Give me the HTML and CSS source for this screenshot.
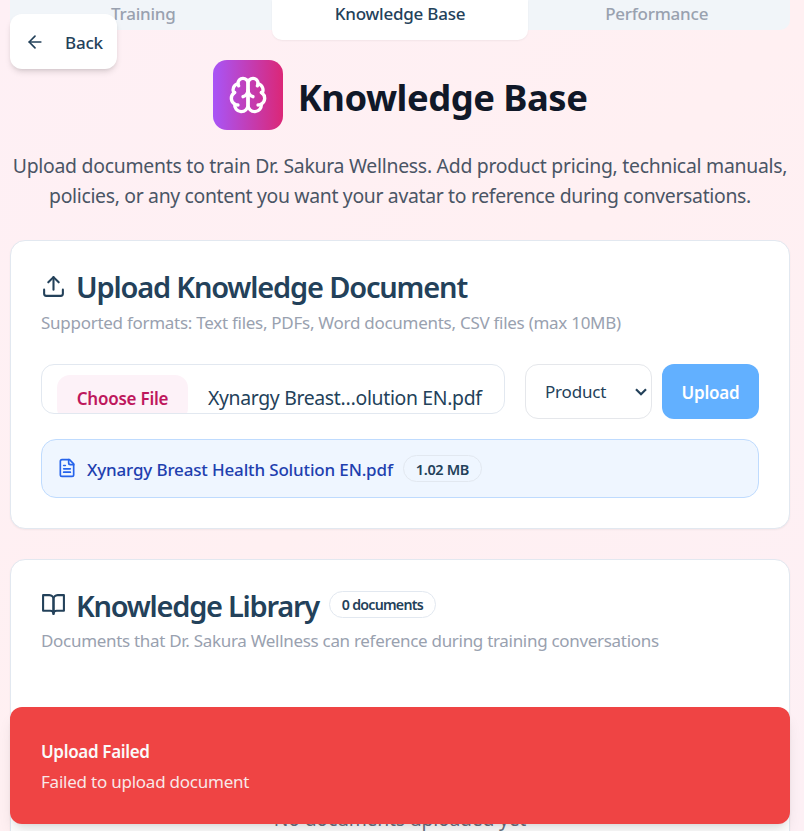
FILE: index.html
```html
<!DOCTYPE html>
<html lang="en">
<head>
<meta charset="utf-8">
<title>Knowledge Base</title>
<link rel="stylesheet" href="styles.css">
</head>
<body>
<nav class="tabs">
  <a class="tab">Training</a>
  <a class="tab active">Knowledge Base</a>
  <a class="tab">Performance</a>
</nav>
<button class="back">
  <svg class="icon" width="20" height="20" viewBox="0 0 24 24"><path d="m12 19-7-7 7-7"/><path d="M19 12H5"/></svg>
  <span>Back</span>
</button>
<main>
  <header class="hero">
    <div class="hero-row">
      <div class="logo">
        <svg class="icon" width="40" height="40" viewBox="0 0 24 24"><path d="M12 5a3 3 0 1 0-5.997.125 4 4 0 0 0-2.526 5.77 4 4 0 0 0 .556 6.588A4 4 0 1 0 12 18Z"/><path d="M12 5a3 3 0 1 1 5.997.125 4 4 0 0 1 2.526 5.77 4 4 0 0 1-.556 6.588A4 4 0 1 1 12 18Z"/><path d="M15 13a4.500 4.500 0 0 1-3-4 4.500 4.500 0 0 1-3 4"/><path d="M17.599 6.500a3 3 0 0 0 .399-1.375"/><path d="M6.003 5.125A3 3 0 0 0 6.401 6.500"/><path d="M3.477 10.896a4 4 0 0 1 .585-.396"/><path d="M19.938 10.500a4 4 0 0 1 .585.396"/><path d="M6 18a4 4 0 0 1-1.967-.516"/><path d="M19.967 17.484A4 4 0 0 1 18 18"/></svg>
      </div>
      <h1>Knowledge Base</h1>
    </div>
    <p class="lead"><span class="line">Upload documents to train Dr. Sakura Wellness. Add product pricing, technical manuals,</span> <span class="line tight">policies, or any content you want your avatar to reference during conversations.</span></p>
  </header>

  <section class="card">
    <h2><svg class="icon" width="25" height="25" viewBox="0 0 24 24"><path d="M21 15v4a2 2 0 0 1-2 2H5a2 2 0 0 1-2-2v-4"/><path d="m17 8-5-5-5 5"/><path d="M12 3v12"/></svg><span>Upload Knowledge Document</span></h2>
    <p class="desc">Supported formats: Text files, PDFs, Word documents, CSV files (max 10MB)</p>
    <div class="controls">
      <div class="file">
        <span class="choose">Choose File</span>
        <span class="name">Xynargy Breast…olution EN.pdf</span>
      </div>
      <div class="select">
        <span>Product</span>
        <svg class="chevron" width="12" height="8" viewBox="0 0 12 8"><path d="m1 1.300 5 5 5-5"/></svg>
      </div>
      <button class="upload">Upload</button>
    </div>
    <div class="selected">
      <svg class="icon" width="20" height="20" viewBox="0 0 24 24"><path d="M15 2H6a2 2 0 0 0-2 2v16a2 2 0 0 0 2 2h12a2 2 0 0 0 2-2V7Z"/><path d="M14 2v4a2 2 0 0 0 2 2h4"/><path d="M10 9H8"/><path d="M16 13H8"/><path d="M16 17H8"/></svg>
      <span class="selected-name">Xynargy Breast Health Solution EN.pdf</span>
      <span class="badge">1.02 MB</span>
    </div>
  </section>

  <section class="card library">
    <h2><svg class="icon" width="25" height="25" viewBox="0 0 24 24"><path d="M2 3h6a4 4 0 0 1 4 4v14a3 3 0 0 0-3-3H2z"/><path d="M22 3h-6a4 4 0 0 0-4 4v14a3 3 0 0 1 3-3h7z"/></svg><span class="library-title">Knowledge Library</span><span class="badge count">0 documents</span></h2>
    <p class="desc">Documents that Dr. Sakura Wellness can reference during training conversations</p>
    <p class="empty">No documents uploaded yet</p>
  </section>
</main>
<div class="toast">
  <strong>Upload Failed</strong>
  <span>Failed to upload document</span>
</div>
</body>
</html>
```
FILE: styles.css
```css
* { box-sizing: border-box; }
html, body { height: 100%; }
body {
  margin: 0;
  overflow: hidden;
  position: relative;
  font-family: "Noto Sans", "Open Sans", sans-serif;
  font-size: 17px;
  line-height: 25px;
  letter-spacing: -0.23px;
  color: #23415a;
  background: linear-gradient(135deg, #fef0f5 0%, #fff0f2 50%, #fdf0f5 100%);
}
h1, h2, p { margin: 0; }
button { font: inherit; letter-spacing: inherit; border: 0; color: inherit; }
.icon { fill: none; stroke: currentColor; stroke-width: 2; stroke-linecap: round; stroke-linejoin: round; flex: none; }

.tabs {
  display: grid;
  grid-template-columns: repeat(3, 1fr);
  align-items: start;
  height: 30px;
  margin: 0 14px 0 10px;
  padding: 0 5px;
  background: #f1f5f9;
  border-radius: 0 0 10px 10px;
}
.tab { height: 30px; line-height: 27px; text-align: center; font-weight: 500; color: #99a1af; }
.tab.active { height: 40px; background: #fff; color: #23415a; border-radius: 0 0 10px 10px; box-shadow: 0 1px 2px rgba(0, 0, 0, .05); }

.back {
  position: absolute;
  left: 10px;
  top: 14px;
  width: 107px;
  height: 55px;
  display: flex;
  align-items: center;
  gap: 20px;
  padding: 2px 15px 0;
  font-weight: 500;
  background: #fff;
  border-radius: 12px;
  box-shadow: 0 4px 6px -1px rgba(0, 0, 0, .12), 0 2px 4px -2px rgba(0, 0, 0, .12);
}
.back .icon { margin-top: -2px; }

main { padding: 30px 14px 0 10px; }
.hero { height: 180px; }
.hero-row { display: flex; justify-content: center; gap: 15px; }
.logo {
  width: 70px;
  height: 70px;
  display: flex;
  align-items: center;
  justify-content: center;
  color: #fff;
  background: linear-gradient(90deg, #a855f7, #db2777);
  border-radius: 14px;
}
h1 { padding-top: 4px; font-size: 36.4px; line-height: 66px; font-weight: 700; letter-spacing: -0.5px; color: #101828; }
.lead { margin-top: 21px; font-size: 19.4px; line-height: 30px; letter-spacing: -0.265px; text-align: center; color: #4a5565; }
.line { display: block; white-space: nowrap; }
.tight { letter-spacing: -0.325px; }

.card {
  height: 289px;
  padding: 30px;
  background: #fff;
  border: 1px solid #e2e8f0;
  border-radius: 15px;
  box-shadow: 0 1px 2px rgba(0, 0, 0, .05);
}
h2 { display: flex; align-items: center; gap: 10px; height: 32px; font-size: 29px; line-height: 32px; font-weight: 600; letter-spacing: -1.18px; }
h2 .icon { margin-top: -2px; }
.library-title { letter-spacing: -1.26px; }
.desc { margin-top: 7px; letter-spacing: -0.275px; color: #99a1af; white-space: nowrap; }
.controls { display: flex; align-items: flex-start; margin-top: 29px; }
.file {
  width: 464px;
  height: 50px;
  display: flex;
  align-items: flex-start;
  gap: 20px;
  overflow: hidden;
  padding: 10px 15px;
  border: 1px solid #e2e8f0;
  border-radius: 13px;
}
.choose { flex: none; width: 131px; height: 46px; line-height: 47px; text-align: center; font-weight: 600; color: #be185d; background: #fdf2f8; border-radius: 13px; }
.name { font-size: 19.4px; line-height: 46px; letter-spacing: -0.33px; white-space: nowrap; }
.select {
  width: 127px;
  height: 55px;
  display: flex;
  align-items: center;
  justify-content: space-between;
  margin: 0 10px 0 20px;
  padding: 0 4px 0 19px;
  letter-spacing: -0.2px;
  border: 1px solid #e5e7eb;
  border-radius: 13px;
}
.chevron { fill: none; stroke: currentColor; stroke-width: 2.200; }
.upload { width: 97px; height: 55px; padding: 2px 0 0; font-weight: 600; letter-spacing: -0.2px; color: #fff; background: #62b0ff; border-radius: 12px; }
.selected {
  display: flex;
  align-items: center;
  height: 59px;
  margin-top: 20px;
  padding: 0 15px;
  color: #2563eb;
  background: #eff6ff;
  border: 1px solid #bfdbfe;
  border-radius: 15px;
}
.selected .icon { margin-top: -2px; }
.selected-name { margin: 2px 10px 0; font-weight: 500; letter-spacing: -0.16px; color: #1e40af; white-space: nowrap; }
.badge { height: 27px; padding: 0 12px; font-size: 14.500px; line-height: 26px; font-weight: 600; letter-spacing: -0.35px; color: #23415a; border: 1px solid #e2e8f0; border-radius: 14px; white-space: nowrap; }
.count { font-size: 14.200px; letter-spacing: -0.75px; }

.library { height: 320px; margin-top: 30px; }
.library h2 { height: 31px; }
.library .desc { margin-top: 7px; letter-spacing: -0.305px; }
.library .badge { margin-top: -2px; }
.empty { margin-top: 150.500px; font-size: 19.4px; line-height: 30px; text-align: center; color: #6a7282; }

.toast {
  position: absolute;
  left: 10px;
  right: 14px;
  bottom: 7px;
  height: 117px;
  display: flex;
  flex-direction: column;
  gap: 5px;
  padding: 32px 31px;
  color: #fafafa;
  background: #ef4444;
  border-radius: 12px;
  box-shadow: 0 10px 15px -3px rgba(0, 0, 0, .1), 0 4px 6px -4px rgba(0, 0, 0, .1);
}
.toast strong { font-weight: 600; letter-spacing: -0.33px; }
.toast span { opacity: .9; }
```
